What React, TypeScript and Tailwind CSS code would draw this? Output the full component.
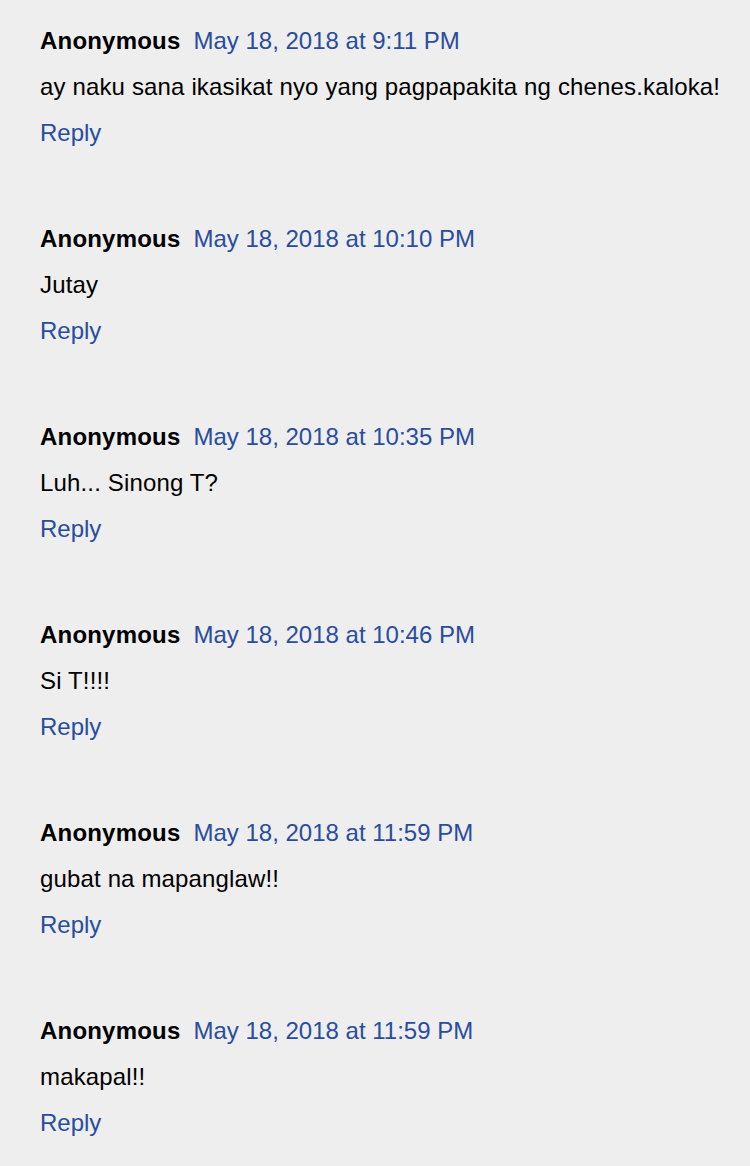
const comments = [
  { date: "May 18, 2018 at 9:11 PM", body: "ay naku sana ikasikat nyo yang pagpapakita ng chenes.kaloka!" },
  { date: "May 18, 2018 at 10:10 PM", body: "Jutay" },
  { date: "May 18, 2018 at 10:35 PM", body: "Luh... Sinong T?" },
  { date: "May 18, 2018 at 10:46 PM", body: "Si T!!!!" },
  { date: "May 18, 2018 at 11:59 PM", body: "gubat na mapanglaw!!" },
  { date: "May 18, 2018 at 11:59 PM", body: "makapal!!" },
];

const App = () => {
  return (
    <div className="min-h-[1166px] w-[750px] bg-[#eeeeee] pl-10 pt-[18px] font-['Liberation_Sans',Arial,sans-serif] text-[24px] leading-[46px] text-black">
      {comments.map((c, i) => (
        <div key={i} className="mb-[60px]">
          <div className="flex items-baseline">
            <span className="mr-[13px] font-bold tracking-[0.2px]">Anonymous</span>
            <a href="#" className="text-[#2a4c9e]">
              {c.date}
            </a>
          </div>
          <p className="tracking-[0.15px]">{c.body}</p>
          <a href="#" className="block text-[#2a4c9e]">
            Reply
          </a>
        </div>
      ))}
    </div>
  );
};

export default App;
